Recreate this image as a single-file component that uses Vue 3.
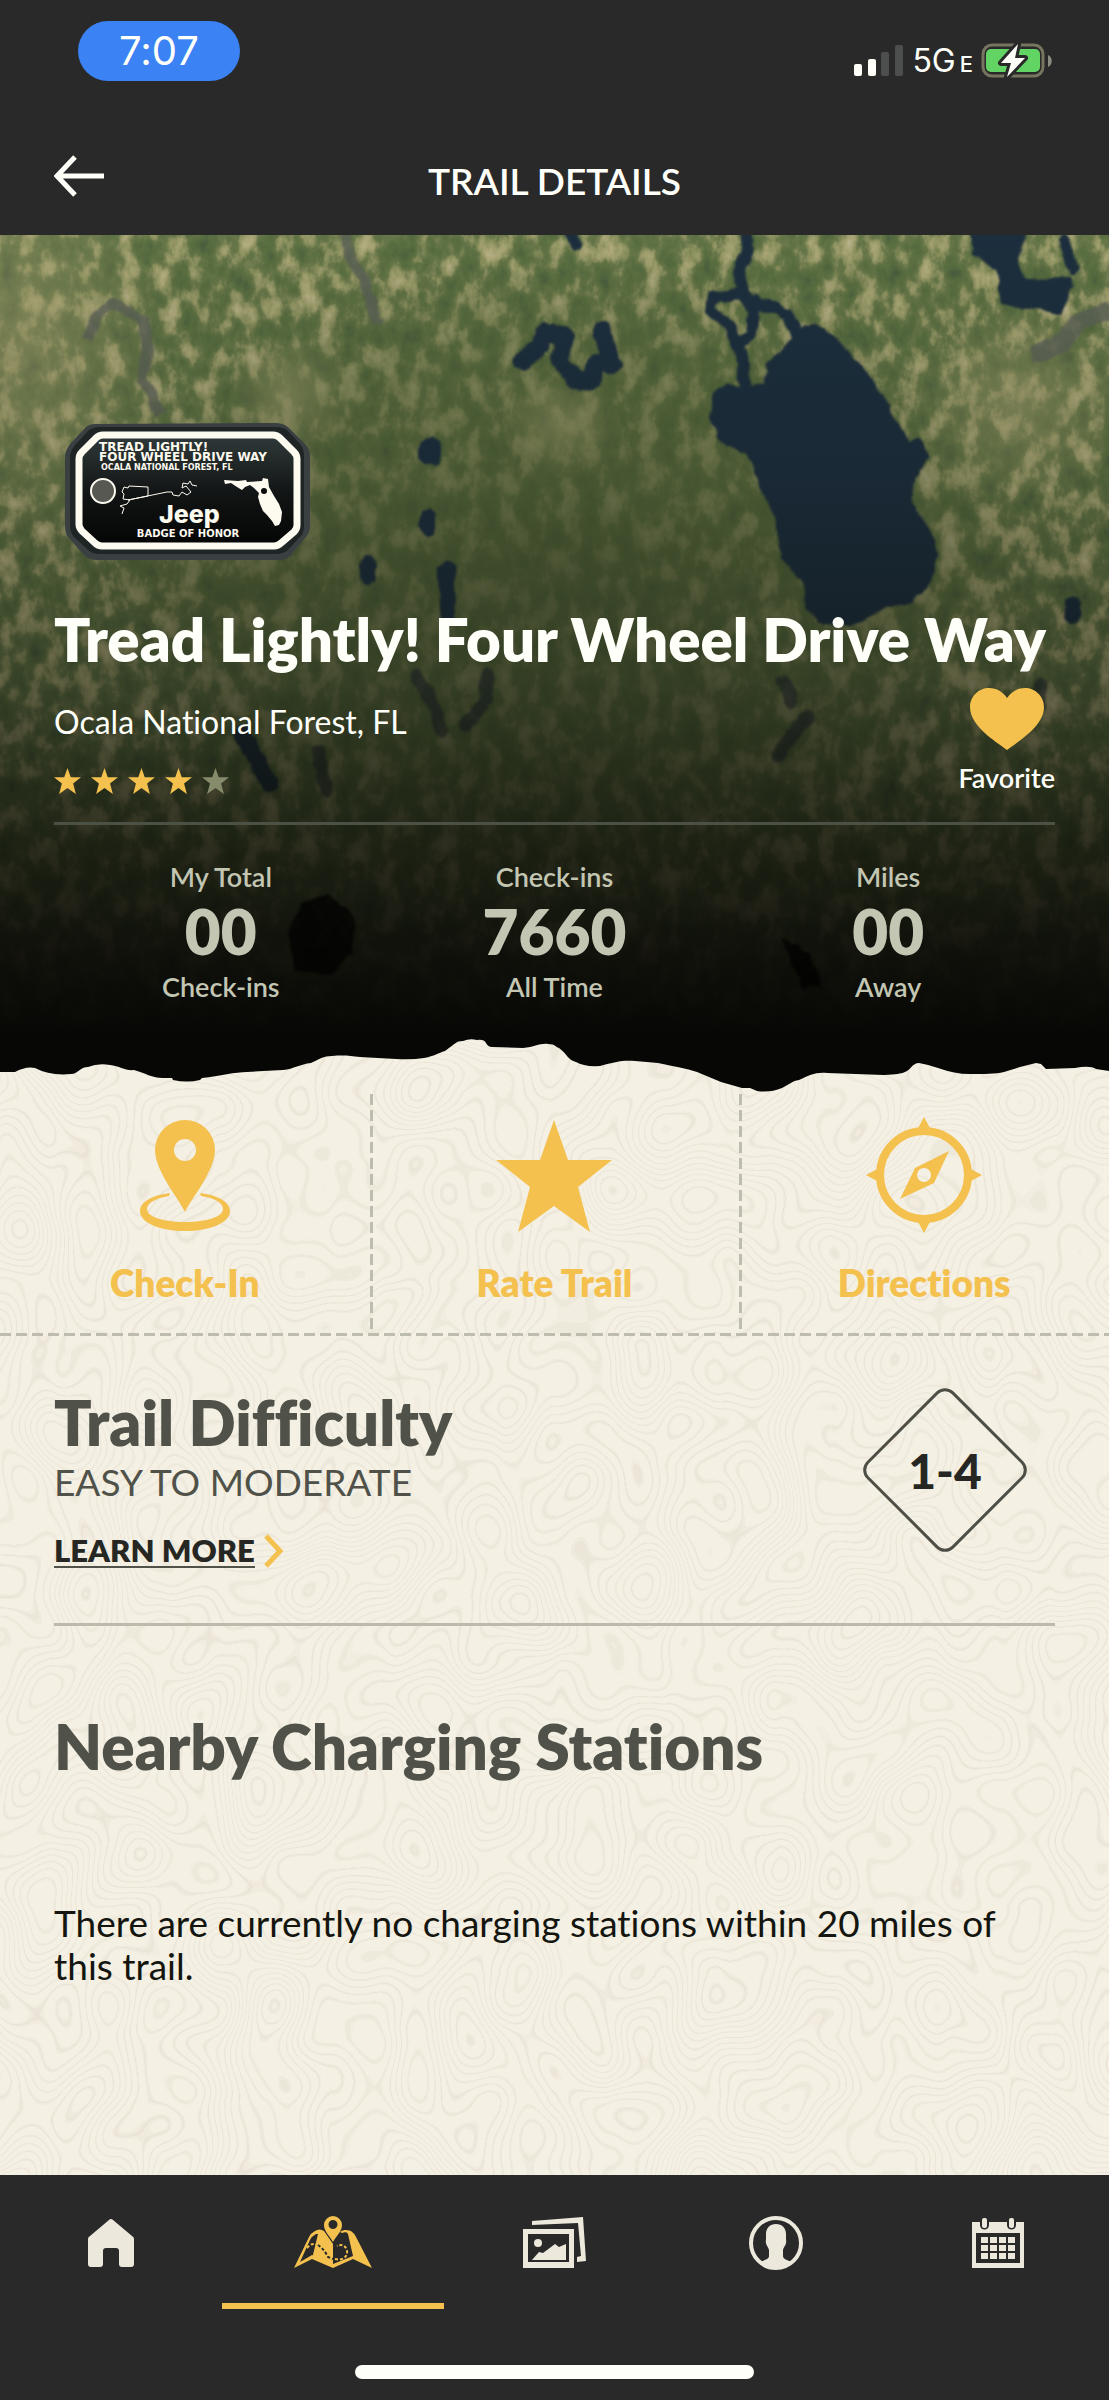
<template>
  <div class="app">
    <header class="header">
      <div class="status-bar">
        <span class="clock">7:07</span>
        <div class="status-icons">
          <svg class="signal" viewBox="0 0 50 34" aria-hidden="true">
            <rect x="0" y="20" width="8" height="12" rx="2" fill="#fffffa" />
            <rect x="14" y="15" width="8" height="17" rx="2" fill="#fffffa" />
            <rect x="27" y="8" width="8" height="24" rx="2" fill="#4d4f4e" />
            <rect x="41" y="1" width="8" height="31" rx="2" fill="#4d4f4e" />
          </svg>
          <span class="network">5G<small>E</small></span>
          <svg class="battery" viewBox="0 0 72 36" aria-hidden="true">
            <rect x="2" y="2" width="60" height="31" rx="9" fill="none" stroke="#77755f" stroke-width="3" />
            <rect x="5" y="6" width="54" height="23" rx="5" fill="#62d463" />
            <path d="M67 12c5 2 5 10 0 12z" fill="#8b8b80" />
            <path d="M37 1 20 20h10l-4 14 18-19H34z" fill="#fffffa" stroke="#292929" stroke-width="6" stroke-linejoin="round" paint-order="stroke" />
          </svg>
        </div>
      </div>
      <div class="title-bar">
        <button class="back" type="button" aria-label="Back">
          <svg viewBox="0 0 50 42">
            <path d="M21 2 3 21l18 19M3 21h47" fill="none" stroke="currentColor" stroke-width="5" />
          </svg>
        </button>
        <h1>TRAIL DETAILS</h1>
      </div>
    </header>

    <section class="hero">
      <svg class="terrain" viewBox="0 0 1109 801" preserveAspectRatio="xMidYMin slice" aria-hidden="true">
        <defs>
          <filter id="land" x="0" y="0" width="100%" height="100%" color-interpolation-filters="sRGB">
            <feTurbulence type="fractalNoise" baseFrequency="0.05 0.035" numOctaves="4" seed="11" />
            <feColorMatrix values="0 0 0 1 0  0 0 0 1 0  0 0 0 1 0  0 0 0 0 1" />
            <feComponentTransfer>
              <feFuncR type="table" tableValues=".26 .28 .31 .34 .36 .41 .54 .62 .68 .72 .75" />
              <feFuncG type="table" tableValues=".32 .35 .39 .42 .44 .47 .56 .62 .66 .7 .72" />
              <feFuncB type="table" tableValues=".24 .24 .25 .25 .26 .29 .37 .43 .48 .54 .6" />
            </feComponentTransfer>
          </filter>
          <filter id="shore" x="-10%" y="-10%" width="120%" height="120%">
            <feTurbulence type="fractalNoise" baseFrequency="0.06" numOctaves="3" seed="4" />
            <feDisplacementMap in="SourceGraphic" scale="8" xChannelSelector="R" yChannelSelector="G" />
            <feGaussianBlur stdDeviation="1" />
          </filter>
          <linearGradient id="shade" x1="0" y1="0" x2="0" y2="1">
            <stop offset="0" stop-color="#0a0b06" stop-opacity="0" />
            <stop offset="0.3" stop-color="#0a0b06" stop-opacity="0.14" />
            <stop offset="0.55" stop-color="#0a0b06" stop-opacity="0.42" />
            <stop offset="0.75" stop-color="#090a05" stop-opacity="0.75" />
            <stop offset="0.9" stop-color="#080805" stop-opacity="0.92" />
            <stop offset="1" stop-color="#070705" />
          </linearGradient>
          <radialGradient id="forest">
            <stop offset="0" stop-color="#4a5a33" stop-opacity="0.75" />
            <stop offset="0.7" stop-color="#4c5d34" stop-opacity="0.45" />
            <stop offset="1" stop-color="#4c5d34" stop-opacity="0" />
          </radialGradient>
          <radialGradient id="field">
            <stop offset="0" stop-color="#a09c6c" stop-opacity="0.5" />
            <stop offset="1" stop-color="#a09c6c" stop-opacity="0" />
          </radialGradient>
        </defs>
        <rect width="1109" height="801" filter="url(#land)" />
        <ellipse cx="560" cy="340" rx="480" ry="320" fill="url(#forest)" />
        <ellipse cx="20" cy="110" rx="150" ry="200" fill="url(#field)" />
        <ellipse cx="290" cy="160" rx="60" ry="60" fill="url(#field)" />
        <ellipse cx="560" cy="190" rx="60" ry="50" fill="url(#field)" />
        <ellipse cx="1020" cy="170" rx="110" ry="100" fill="url(#field)" />
        <g filter="url(#shore)">
          <g fill="none" stroke="#5c6157" stroke-width="11" stroke-linejoin="round" opacity="0.8">
            <path d="M343-5 350 20l16 30 12 38M88 105l6-22 20-14 30 16 4 26-5 34 18 34" />
            <path d="M1109 75l-30 12-20 24-28 8" stroke-width="18" />
          </g>
          <path fill="#1e2e3c" d="M796 95q14-6 28-3l18 16 28 34 21 33 18 33 10-5 11 19-11 16-10 24 21 33 9 27-9 26-18 19-35 11-28 14-29-4-14-16-3-24-22-26-5-34-16-40-14-30-25-10-12-26 2-24 17-10 18 7 18-7 3-20 18-16z" />
          <path fill="#1e2e3c" d="M969-8h60l-11 33 7 18 46-1 4 10-14 26-32-5-28-3-4-32-25-20z" />
          <g fill="none" stroke="#1e2e3c" stroke-linejoin="round" stroke-linecap="round">
            <path d="M746-8l2 23-9 20 3 24-28 2-4 14 18 16 14 28 4 36M742 60l12 14-2 26-12 8M756 66l32 14 10 22" stroke-width="12" />
            <path d="M522 126l18-14 4-14 22 2-6 24 14 20 18 2 4-18M612 130l-10-34" stroke-width="18" />
            <path d="M1064 5l9 28M567-6l10 16" stroke-width="12" />
            <path d="M430 212v8" stroke-width="22" />
            <path d="M428 280v14M368 328v14" stroke-width="16" />
            <path d="M446 334l2 50M242 498l28 50M1072 370v10" stroke-width="17" />
            <path d="M416 440l20 34 6 22M486 440v24l-20 26M784 446l8 22M808 480l-30 40M318 516l8 40M1040 450v20" stroke-width="13" stroke="#1d2934" opacity="0.6" />
          </g>
        </g>
        <rect width="1109" height="801" fill="url(#shade)" />
        <g fill="#050603" opacity="0.7" filter="url(#shore)">
          <path d="M300 668l30-10 26 26-4 34-22 24-36-6-6-36zM780 700l30 20 12 30-20 4z" />
        </g>
      </svg>

      <div class="hero-content">
        <svg class="badge" viewBox="0 0 246 138" role="img" aria-label="Jeep Badge of Honor">
          <defs>
            <linearGradient id="plate" x1="0" y1="0" x2="0" y2="1">
              <stop offset="0" stop-color="#303a3a" />
              <stop offset="0.5" stop-color="#131616" />
              <stop offset="1" stop-color="#040404" />
            </linearGradient>
          </defs>
          <path d="M0 32Q1 26 6 20L20 5q4-4 10-4l180-1q8 0 13 4l17 17q5 5 5 12v70q0 7-5 12l-14 17q-4 5-12 5H32q-8 0-13-5L5 116q-5-5-5-12z" fill="#3a4042" />
          <path d="M5 32Q6 27 10 22L24 7q4-3 9-3h178q8 0 12 4l12 13q4 5 4 12v70q0 7-4 11l-12 13q-5 4-12 4H34q-7 0-11-4L9 114q-4-5-4-11z" fill="#1f2425" />
          <path d="M14 36q0-4 3-7l14-14q3-3 7-3h170q4 0 7 3l14 14q3 3 3 7v66q0 4-3 7l-13 11q-3 3-7 3H37q-4 0-7-3L17 108q-3-3-3-7z" fill="url(#plate)" stroke="#fdfaf0" stroke-width="7" />
          <g fill="#fdfaf0" class="badge-text">
            <text x="34" y="28" font-size="12">TREAD LIGHTLY!</text>
            <text x="34" y="38" font-size="12">FOUR WHEEL DRIVE WAY</text>
            <text x="36" y="47" font-size="8">OCALA NATIONAL FOREST, FL</text>
            <text x="123" y="114" font-size="10" text-anchor="middle">BADGE OF HONOR</text>
            <text x="94" y="100" font-size="25" class="brand">Jeep</text>
          </g>
          <circle cx="38" cy="68" r="12" fill="#565851" stroke="#fdfaf0" stroke-width="2" />
          <path d="M57 91l2-6-4-2 7-2 3-4-7-1 1-5-2-2 2-5 4 1 1-2 19 1v9l-20 4 39-8h5l1 3 6 1 3-4 5 3 4-3-5-6-4 2 1-5 5 1 2-3 2 4 5 1" fill="none" stroke="#fdfaf0" />
          <path d="M159 57l14 1 8-1 1 2 15-1 1-3 5 1 1 8 5 9 5 8 3 8-1 9-2 4-4 1-3-5-5-6-4-4-3-7-2-7 1-4-5-5-4-3-5 2-3 3-5-3-6-4-6 1z" fill="#fdfaf0" />
          <circle cx="199" cy="68" r="3" fill="#0a0a0a" />
        </svg>

        <h2>{{ trail.name }}</h2>

        <div class="meta">
          <div class="meta-left">
            <p>{{ trail.location }}</p>
            <div class="stars" role="img" :aria-label="trail.rating + ' of 5 stars'">
              <svg v-for="n in 5" :key="n" viewBox="0 0 116 112" :class="{ off: n > trail.rating }">
                <path :d="starPath" />
              </svg>
            </div>
          </div>
          <button class="favorite" type="button" :aria-pressed="favorite" @click="favorite = !favorite">
            <svg viewBox="0 0 74 62" aria-hidden="true">
              <path d="M37 62C25 53 0 38 0 19 0 8 9 0 19 0c8 0 14 4 18 10C41 4 47 0 55 0c10 0 19 8 19 19 0 19-25 34-37 43z" />
            </svg>
            Favorite
          </button>
        </div>

        <dl class="stats">
          <div v-for="stat in stats" :key="stat.bottom">
            <dt>{{ stat.top }}</dt>
            <dd class="value">{{ stat.value }}</dd>
            <dd>{{ stat.bottom }}</dd>
          </div>
        </dl>
      </div>
    </section>

    <main class="panel">
      <svg class="contours" aria-hidden="true">
        <filter id="topo" x="0" y="0" width="100%" height="100%" color-interpolation-filters="sRGB">
          <feTurbulence type="fractalNoise" baseFrequency="0.009 0.008" numOctaves="2" seed="7" />
          <feColorMatrix values="0 0 0 0 0.86  0 0 0 0 0.84  0 0 0 0 0.78  0 0 0 1 0" />
          <feComponentTransfer>
            <feFuncA type="table" :tableValues="contourSteps" />
          </feComponentTransfer>
          <feGaussianBlur stdDeviation="0.6" />
        </filter>
        <rect width="100%" height="100%" filter="url(#topo)" />
      </svg>

      <svg class="torn-edge" viewBox="0 0 1109 58" preserveAspectRatio="none" aria-hidden="true">
        <path d="M0-1V36H15Q26 30 35 32 50 40 71 38C78 38 80 31 88 31Q98 27 110 29C120 30 125 35 134 34 145 37 152 42 163 42L172 42 173 44Q187 47 200 44L202 42C220 40 235 36 247 36L283 34C294 33 300 28 311 27 320 23 323 20 332 20 345 19 350 20 360 21L396 23Q412 24 424 22C435 20 438 17 445 15 455 8 456 5 463 5Q470 2 477 4 484 3 486 7 488 11 492 11L523 12C535 11 540 7 548 8 556 8 555 11 559 12 568 19 568 24 576 26Q584 31 600 30C615 26 622 24 635 25L658 27C675 31 686 32 697 36L721 46 742 52 750 52 757 55Q770 57 782 52C790 48 792 45 799 44 810 39 815 36 827 37L884 39C897 38 900 38 905 36 911 34 912 27 919 27Q930 29 938 32 955 38 969 38C985 38 995 38 1004 36L1020 31 1036 27 1041 28 1046 33 1075 32Q1090 29 1096 33L1109 35V-1Z" fill="#070705" />
      </svg>

      <div class="actions">
        <button type="button">
          <svg viewBox="0 0 116 116" aria-hidden="true">
            <path fill-rule="evenodd" d="M58 95C52 82 28 54 28 33a30 30 0 0 1 60 0c0 21-24 49-30 62zM58 22a11 11 0 1 0 0 22 11 11 0 0 0 0-22z" />
            <path d="M43 76C27 78 13 84 13 94c0 12 20 20 45 20s45-8 45-20c0-10-14-16-30-18l1 3c14 2 22 7 22 13 0 8-17 13-38 13s-38-5-38-13c0-6 9-11 22-13z" />
          </svg>
          Check-In
        </button>
        <button type="button">
          <svg viewBox="0 0 116 116" aria-hidden="true">
            <path :d="starPath" transform="translate(0 3)" />
          </svg>
          Rate Trail
        </button>
        <button type="button">
          <svg viewBox="0 0 116 116" aria-hidden="true">
            <path d="M58 0l7 13H51zM58 116l7-13H51zM0 58l13-7v14zM116 58l-13-7v14z" />
            <circle cx="58" cy="58" r="44" fill="none" stroke="currentColor" stroke-width="8" />
            <path fill-rule="evenodd" d="M83 34 68 66 34 82 49 51zM58 51a7 7 0 1 0 0 14 7 7 0 0 0 0-14z" />
          </svg>
          Directions
        </button>
      </div>

      <div class="content">
        <section class="difficulty">
          <div>
            <h3>Trail Difficulty</h3>
            <p>EASY TO MODERATE</p>
            <a href="#">
              <span>LEARN MORE</span>
              <svg viewBox="0 0 22 34" aria-hidden="true">
                <path d="M3 2l14 15L3 32" fill="none" stroke="#f4c14f" stroke-width="5" />
              </svg>
            </a>
          </div>
          <div class="diamond">
            <svg viewBox="0 0 164 164" aria-hidden="true">
              <rect x="22" y="22" width="120" height="120" rx="11" transform="rotate(45 82 82)" fill="none" stroke="#4d4f47" stroke-width="3" />
            </svg>
            <span>1-4</span>
          </div>
        </section>

        <section class="charging">
          <h3>Nearby Charging Stations</h3>
          <p>There are currently no charging stations within 20 miles of this trail.</p>
        </section>
      </div>
    </main>

    <nav class="tabs">
      <div class="tab-row">
        <button type="button" aria-label="Home">
          <svg viewBox="0 0 80 56">
            <path d="M17 24q0-2 2-3L38 5q2-2 4 0l19 16q2 1 2 3v25q0 3-3 3H51q-3 0-3-3V36q0-3-3-3H35q-3 0-3 3v13q0 3-3 3h-9q-3 0-3-3z" />
          </svg>
        </button>
        <button type="button" aria-label="Trails" class="active">
          <svg viewBox="0 0 80 56">
            <path d="M31 16c-3-2-6-2-9 0q-4 2-6 6L1 53l18-9 21 9 20-9 19 9-16-31q-2-4-5-6c-4-1-7-2-11 1l2 1c3-1 5-1 6 1l5 22-20 8-21-9-12 7L17 25q2-4 6-6h2l-6 25 21 9V29z" />
            <path fill-rule="evenodd" d="M40 27C36 20 31 16 31 10a9 9 0 0 1 18 0c0 6-5 10-9 17zM40 5a4 4 0 1 0 0 9 4 4 0 0 0 0-9z" />
            <path d="M14 33q6-7 12-2" fill="none" stroke="currentColor" stroke-width="2" stroke-dasharray="3 2" />
            <path d="M25 30q6 4 10 12l5 2" fill="none" stroke="#292929" stroke-width="2" stroke-dasharray="3 2" />
            <path d="M42 44c7 2 13-2 12-8s-6-7-10-5" fill="none" stroke="currentColor" stroke-width="2" stroke-dasharray="3 2" />
          </svg>
        </button>
        <button type="button" aria-label="Photos">
          <svg viewBox="0 0 80 56">
            <path d="M18 6 69 2l3 44-9 1v-5l4-1-3-33-46 2z" />
            <path fill-rule="evenodd" d="M9 14h51v39H9zM14 19v28h41V19z" />
            <circle cx="24" cy="28" r="4" />
            <path d="M18 45l7-8 4 1 12-9 4 3 7-3v16z" />
          </svg>
        </button>
        <button type="button" aria-label="Profile">
          <svg viewBox="0 0 80 56">
            <circle cx="40" cy="28" r="25" fill="none" stroke="currentColor" stroke-width="4" />
            <path d="M40 9c6 0 10 4 10 10v5c1 6-2 7-3 11v6c0 3 4 4 9 6-9 9-23 9-32 0 5-2 9-3 9-6v-6c-1-4-4-5-3-11v-5c0-6 4-10 10-10z" />
          </svg>
        </button>
        <button type="button" aria-label="Events">
          <svg viewBox="0 0 80 56">
            <path fill-rule="evenodd" d="M14 7h8v3c0 6 9 6 9 0V7h18v3c0 6 9 6 9 0V7h8v46H14zM18 18v30h44V18z" />
            <rect x="24" y="3" width="5" height="10" rx="2" />
            <rect x="51" y="3" width="5" height="10" rx="2" />
            <path d="M23 22h7v6h-7zM32 22h7v6h-7zM41 22h7v6h-7zM50 22h7v6h-7zM23 30h7v6h-7zM32 30h7v6h-7zM41 30h7v6h-7zM50 30h7v6h-7zM23 38h7v6h-7zM32 38h7v6h-7zM41 38h7v6h-7zM50 38h7v6h-7z" />
          </svg>
        </button>
      </div>
      <div class="home-indicator"></div>
    </nav>
  </div>
</template>

<script setup>
import { ref } from 'vue'

const trail = {
  name: 'Tread Lightly! Four Wheel Drive Way',
  location: 'Ocala National Forest, FL',
  rating: 4,
}

const stats = [
  { top: 'My Total', value: '00', bottom: 'Check-ins' },
  { top: 'Check-ins', value: '7660', bottom: 'All Time' },
  { top: 'Miles', value: '00', bottom: 'Away' },
]

const favorite = ref(true)

const starPath = 'M58 0 72 40H116L82 67 94 112 58 86 22 112 34 67 0 40H44Z'

// one thin opaque step out of every six gives a contour line
const contourSteps = Array.from({ length: 151 }, (_, i) => (i % 6 === 0 ? 0.42 : 0)).join(' ')
</script>

<style>
body {
  margin: 0;
  background: #292929;
}
</style>

<style scoped>
.app {
  display: flex;
  flex-direction: column;
  min-height: 100vh;
  font-family: Lato, 'Liberation Sans', sans-serif;
  font-variant-ligatures: none;
  color: #fffffa;
}
h1, h2, h3, p, dl, dd {
  margin: 0;
}
button {
  border: 0;
  padding: 0;
  background: none;
  font: inherit;
  color: inherit;
  cursor: pointer;
}
svg {
  display: block;
  fill: currentColor;
}

.header {
  background: #292929;
}
.status-bar {
  display: flex;
  justify-content: space-between;
  align-items: flex-start;
  padding: 21px 56px 0 78px;
  font-family: Inter, sans-serif;
}
.clock {
  width: 162px;
  border-radius: 30px;
  background: #3b82f4;
  font-size: 40px;
  line-height: 60px;
  text-align: center;
}
.status-icons {
  display: flex;
  align-items: center;
  gap: 8px;
  padding-top: 20px;
}
.signal {
  width: 50px;
}
.network {
  font-size: 32px;
  line-height: 40px;
}
.network small {
  margin-left: 4px;
  font-size: 22px;
  line-height: 24px;
  font-weight: 500;
}
.battery {
  width: 72px;
}
.title-bar {
  display: grid;
  grid-template-columns: 1fr auto 1fr;
  align-items: start;
  padding: 74px 54px 28px;
}
.back {
  width: 50px;
}
.title-bar h1 {
  font-size: 37px;
  line-height: 52px;
  font-weight: 600;
}

.hero {
  position: relative;
  overflow: hidden;
  background: #070705;
}
.terrain {
  position: absolute;
  inset: 0;
  width: 100%;
  height: 100%;
}
.hero-content {
  position: relative;
  padding: 188px 54px 33px;
}
.badge {
  width: 246px;
  margin: 0 0 44px 11px;
}
.badge-text {
  font-family: 'DejaVu Sans', sans-serif;
  font-weight: 700;
}
.brand {
  font-family: Inter, sans-serif;
  font-weight: 800;
}
.hero h2 {
  font-size: 60px;
  line-height: 68px;
  font-weight: 800;
  white-space: nowrap;
}
.meta {
  display: flex;
  justify-content: space-between;
  align-items: flex-end;
  margin-top: 15px;
}
.meta-left p {
  font-size: 32px;
  line-height: 40px;
}
.stars {
  display: flex;
  gap: 10px;
  margin-top: 26px;
  color: #f4c14f;
}
.stars svg {
  width: 27px;
}
.stars .off {
  color: #858b6b;
}
.favorite {
  display: flex;
  flex-direction: column;
  align-items: center;
  gap: 12px;
  font-size: 27px;
  line-height: 32px;
  font-weight: 600;
}
.favorite svg {
  width: 74px;
  color: #f4c14f;
}
.stats {
  display: grid;
  grid-template-columns: repeat(3, 1fr);
  margin-top: 28px;
  padding-top: 36px;
  border-top: 3px solid #4c5145;
  color: #c3c6b3;
  font-size: 27px;
  line-height: 32px;
  font-weight: 600;
  text-align: center;
}
.stats .value {
  margin: 6px 0 8px;
  font-size: 62px;
  line-height: 64px;
  font-weight: 800;
}

.panel {
  position: relative;
  flex: 1;
  background: #f4f0e3;
}
.panel > * {
  position: relative;
}
.panel .contours {
  position: absolute;
  inset: 0;
  width: 100%;
  height: 100%;
}
.torn-edge {
  width: 100%;
  height: 58px;
}
.actions {
  display: grid;
  grid-template-columns: repeat(3, 1fr);
  padding-bottom: 6px;
  background: repeating-linear-gradient(to right, #bdbcae 0 11px, transparent 11px 16px) bottom / 100% 3px no-repeat;
}
.actions button {
  display: flex;
  flex-direction: column;
  align-items: center;
  gap: 26px;
  padding: 23px 0;
  color: #f4c14f;
  font-size: 37px;
  line-height: 48px;
  font-weight: 800;
}
.actions button + button {
  background: repeating-linear-gradient(to bottom, #bdbcae 0 11px, transparent 11px 16px) left / 3px 100% no-repeat;
}
.actions svg {
  width: 116px;
}

.content {
  padding: 0 54px;
}
.content h3 {
  font-size: 62px;
  line-height: 68px;
  font-weight: 800;
  color: #50524a;
}
.difficulty {
  display: flex;
  justify-content: space-between;
  padding: 52px 28px 55px 0;
  border-bottom: 3px solid #bdbaad;
}
.difficulty p {
  margin-top: 2px;
  font-size: 37px;
  line-height: 48px;
  color: #50524a;
}
.difficulty a {
  display: flex;
  align-items: center;
  gap: 8px;
  width: fit-content;
  margin-top: 28px;
  color: #262723;
  font-size: 31px;
  line-height: 32px;
  font-weight: 800;
  text-decoration: none;
}
.difficulty a span {
  border-bottom: 2px solid #50524a;
}
.difficulty a svg {
  width: 22px;
}
.diamond {
  display: grid;
  place-items: center;
  width: 164px;
  height: 164px;
  color: #262723;
  font-size: 48px;
  font-weight: 900;
}
.diamond > * {
  grid-area: 1 / 1;
}
.charging {
  padding-top: 86px;
  color: #14150f;
}
.charging p {
  margin-top: 121px;
  font-size: 37px;
  line-height: 43px;
}

.tabs {
  background: #292929;
  padding-bottom: 21px;
}
.tab-row {
  display: grid;
  grid-template-columns: repeat(5, 1fr);
  color: #ece9dc;
}
.tab-row button {
  display: flex;
  justify-content: center;
  padding: 40px 0 32px;
  border-bottom: 6px solid transparent;
}
.tab-row .active {
  color: #f4c14f;
  border-color: #f4c14f;
}
.tab-row svg {
  width: 80px;
}
.home-indicator {
  width: 36%;
  height: 14px;
  margin: 56px auto 0;
  border-radius: 7px;
  background: #fffffa;
}
</style>
